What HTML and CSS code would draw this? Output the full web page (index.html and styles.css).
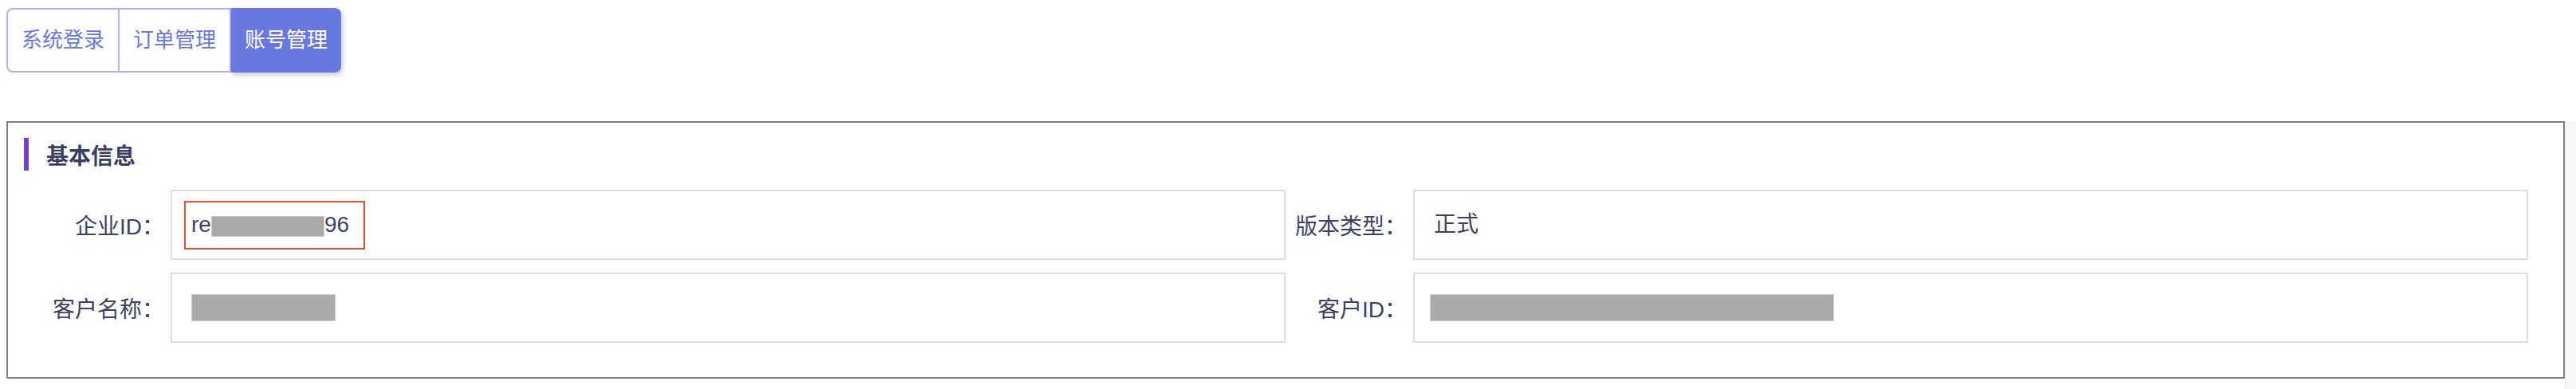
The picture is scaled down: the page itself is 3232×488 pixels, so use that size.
FILE: index.html
```html
<!DOCTYPE html>
<html lang="zh-CN">
<head>
  <meta charset="UTF-8">
  <title>账号管理</title>
  <link rel="stylesheet" href="styles.css">
</head>
<body>

<div class="tabs">
  <div class="tab">系统登录</div>
  <div class="tab">订单管理</div>
  <div class="tab active">账号管理</div>
</div>

<div class="main">
  <div class="panel">
    <div class="section-title">基本信息</div>

    <div class="form">
      <div class="label">企业ID：</div>
      <div class="field">
        <span class="value marked">re<span class="mask mask-id"></span>96</span>
      </div>

      <div class="label">版本类型：</div>
      <div class="field">
        <span class="value">正式</span>
      </div>

      <div class="label">客户名称：</div>
      <div class="field">
        <span class="mask mask-name"></span>
      </div>

      <div class="label">客户ID：</div>
      <div class="field">
        <span class="mask mask-cid"></span>
      </div>
    </div>
  </div>
  <div class="side-strip"></div>
</div>

</body>
</html>
```

FILE: styles.css
```css
body {
  margin: 8px 0 0 8px;
  font-family: "Liberation Sans", "Noto Sans CJK SC", sans-serif;
  background: #fff;
  color: #3b4264;
}

/* Tabs */
.tabs {
  display: inline-flex;
  margin-top: 2px;
}

.tab {
  height: 77px;
  line-height: 77px;
  padding: 0 17px;
  font-size: 26px;
  color: #6877df;
  background: #fff;
  border: 2px solid #abb3f1;
  border-left: none;
  cursor: pointer;
}

.tab:first-child {
  border-left: 2px solid #abb3f1;
  border-radius: 8px 0 0 8px;
}

.tab.active {
  background: #6878e0;
  color: #fff;
  border: none;
  border-top: 2px solid #6878e0;
  border-bottom: 2px solid #6878e0;
  border-radius: 0 8px 8px 0;
  box-shadow: 2px 3px 6px rgba(0, 0, 0, 0.22);
}

/* Panel */
.main {
  display: flex;
  align-items: flex-start;
  margin-top: 61px;
}

.panel {
  flex: 1;
  border: 2px solid #808080;
  padding: 19px 20px 43px 20px;
}

.side-strip {
  width: 13px;
  height: 336px;
  background: #f7f7f7;
  border-left: 1px solid #ebebeb;
}

.section-title {
  display: flex;
  align-items: center;
  height: 41px;
  border-left: 6px solid #7443cc;
  padding-left: 22px;
  font-size: 28px;
  font-weight: bold;
  color: #3a405f;
}

.form {
  display: grid;
  grid-template-columns: 160px 1fr 160px 1fr;
  row-gap: 16px;
  margin: 24px 24px 0;
}

.label {
  align-self: center;
  text-align: right;
  padding-right: 8px;
  font-size: 28px;
  white-space: nowrap;
}

.field {
  height: 84px;
  border: 2px solid #dedede;
  display: flex;
  align-items: center;
  padding-left: 24px;
  font-size: 28px;
}

.value {
  line-height: 32px;
}

.value.marked {
  position: relative;
}

.value.marked::after {
  content: "";
  position: absolute;
  left: -9px;
  right: -20px;
  top: -14px;
  bottom: -15px;
  border: 2px solid #ee4a2f;
}

.mask {
  display: inline-block;
  background: #aaaaaa;
  border: 1px solid #cccccc;
  vertical-align: middle;
}

.mask-id { width: 140px; height: 24px; }
.mask-name { width: 179px; height: 32px; }
.mask-cid { width: 505px; height: 32px; margin-left: -5px; }
```
